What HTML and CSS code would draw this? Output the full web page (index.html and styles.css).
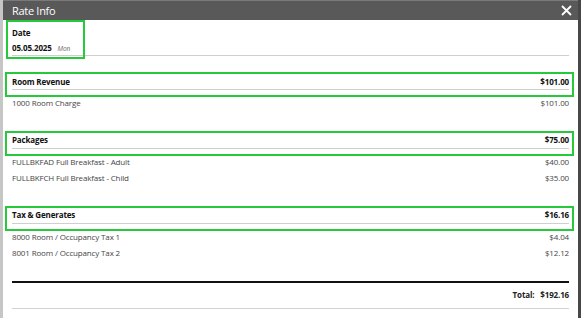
FILE: index.html
```html
<!DOCTYPE html>
<html>
<head>
<meta charset="utf-8">
<link rel="stylesheet" href="styles.css">
</head>
<body>
<div class="screen">
  <div class="edge-left"></div>
  <div class="dialog">
    <div class="titlebar">
      <span class="title">Rate Info</span>
      <svg class="close" width="11" height="11" viewBox="0 0 11 11"><path d="M1 1L10 10M10 1L1 10" stroke="#fff" stroke-width="1.8" fill="none"/></svg>
    </div>
    <div class="content">
      <div class="date-block">
        <div class="date-label">Date</div>
        <div class="date-value">05.05.2025 <span class="day">Mon</span></div>
        <div class="hl hl-date"></div>
      </div>

      <div class="section s1">
        <div class="sec-head"><span>Room Revenue</span><span>$101.00</span><div class="hl hl-head"></div></div>
        <div class="items">
          <div class="item"><span>1000 Room Charge</span><span>$101.00</span></div>
        </div>
      </div>

      <div class="section">
        <div class="sec-head"><span>Packages</span><span>$75.00</span><div class="hl hl-head"></div></div>
        <div class="items">
          <div class="item"><span>FULLBKFAD Full Breakfast - Adult</span><span>$40.00</span></div>
          <div class="item"><span>FULLBKFCH Full Breakfast - Child</span><span>$35.00</span></div>
        </div>
      </div>

      <div class="section">
        <div class="sec-head"><span>Tax &amp; Generates</span><span>$16.16</span><div class="hl hl-head"></div></div>
        <div class="items">
          <div class="item"><span>8000 Room / Occupancy Tax 1</span><span>$4.04</span></div>
          <div class="item"><span>8001 Room / Occupancy Tax 2</span><span>$12.12</span></div>
        </div>
      </div>

      <div class="total-row"><span class="total-label">Total:</span><span class="total-value">$192.16</span></div>
    </div>
  </div>
  <div class="edge-right"></div>
</div>
</body>
</html>
```

FILE: styles.css
```css
* { box-sizing: border-box; }
html, body { margin: 0; padding: 0; }
body {
  width: 581px;
  height: 318px;
  overflow: hidden;
  font-family: "Open Sans", "Noto Sans", sans-serif;
  letter-spacing: -0.15px;
  background: #fff;
}
.screen {
  display: flex;
  height: 318px;
}
.edge-left {
  width: 3px;
  background: #c6c6c6;
  flex: none;
}
.edge-right {
  width: 3px;
  background: #474747;
  flex: none;
}
.dialog {
  flex: 1;
  background: #fff;
  display: flex;
  flex-direction: column;
}
.titlebar {
  height: 20px;
  background: #595959;
  border-top: 1px solid #7a7a7a;
  display: flex;
  align-items: center;
  justify-content: space-between;
  padding: 0 6px 0 9px;
}
.title {
  color: #fff;
  font-size: 11px;
  letter-spacing: -0.3px;
  line-height: 19px;
}
.close { display: block; }
.content {
  padding: 4px 9px 0 9px;
}
.date-block {
  position: relative;
  border-bottom: 1px solid #cfcfcf;
  padding-bottom: 1px;
}
.date-label {
  font-size: 8px;
  font-weight: 700;
  color: #111;
  height: 17px;
  line-height: 17px;
}
.date-value {
  font-size: 8px;
  font-weight: 700;
  color: #111;
  height: 13px;
  line-height: 13px;
}
.day {
  font-weight: 400;
  font-style: italic;
  font-size: 6.5px;
  color: #666;
  margin-left: 4px;
}
.hl {
  position: absolute;
  border: 2px solid #25c93a;
  pointer-events: none;
}
.hl-date {
  left: -6px;
  top: -4px;
  width: 79px;
  height: 39px;
}
.section { margin-top: 20px; }
.section.s1 { margin-top: 17px; }
.sec-head {
  position: relative;
  display: flex;
  justify-content: space-between;
  align-items: center;
  height: 17px;
  border-bottom: 1px solid #cfcfcf;
  font-size: 8px;
  font-weight: 700;
  color: #111;
}
.hl-head {
  left: -7px;
  right: -5px;
  top: -1px;
  bottom: -8px;
}
.items { margin-top: 5px; }
.item {
  display: flex;
  justify-content: space-between;
  align-items: center;
  height: 16.5px;
  line-height: 12px;
  font-size: 8px;
  color: #464646;
}
.total-row {
  margin-top: 19px;
  border-top: 2px solid #111;
  border-bottom: 1px solid #d2d2d2;
  display: flex;
  justify-content: flex-end;
  align-items: center;
  height: 28px;
  padding-bottom: 1px;
  font-size: 8px;
  font-weight: 700;
  color: #222;
}
.total-label { margin-right: 6px; }
```
